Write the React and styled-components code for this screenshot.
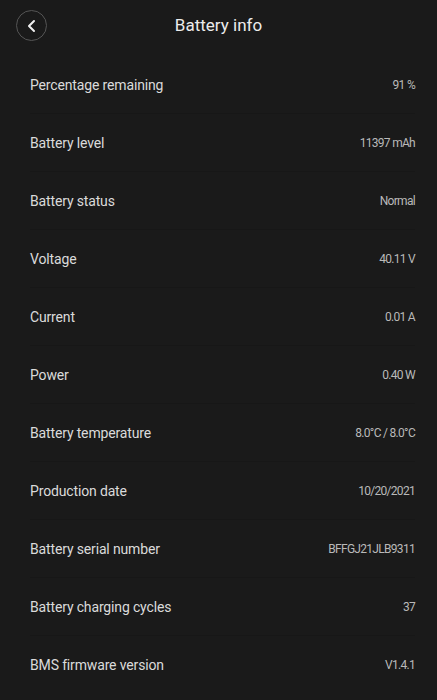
import React from "react";
import styled, { createGlobalStyle } from "styled-components";

const Global = createGlobalStyle`
  html, body { margin: 0; padding: 0; background: #1a1a1a; }
  body { font-family: Roboto, "Noto Sans", sans-serif; -webkit-font-smoothing: antialiased; }
`;

const Page = styled.div`
  width: 437px;
  min-height: 700px;
  background: #1a1a1a;
  color: #dcdcdc;
`;

const Header = styled.header`
  position: relative;
  height: 50px;
  display: flex;
  align-items: center;
  justify-content: center;
`;

const BackButton = styled.button`
  position: absolute;
  left: 16px;
  top: 10px;
  width: 31px;
  height: 31px;
  border-radius: 50%;
  border: 1px solid #555555;
  background: transparent;
  padding: 0;
  display: flex;
  align-items: center;
  justify-content: center;
  color: #f0f0f0;
`;

const Title = styled.h1`
  margin: 0;
  font-size: 17px;
  font-weight: 400;
  color: #ececec;
`;

const List = styled.div`
  padding: 6px 22px 0 30px;
`;

const Row = styled.div`
  height: 57px;
  display: flex;
  align-items: center;
  justify-content: space-between;
  border-bottom: 1px solid ${(p) => (p.$last ? "transparent" : "#171717")};
`;

const Label = styled.span`
  font-size: 14px;
  color: #dadada;
  letter-spacing: -0.15px;
`;

const Value = styled.span`
  font-size: 12px;
  color: #b9b9b9;
  letter-spacing: -0.7px;
`;

const rows = [
  ["Percentage remaining", "91 %"],
  ["Battery level", "11397 mAh"],
  ["Battery status", "Normal"],
  ["Voltage", "40.11 V"],
  ["Current", "0.01 A"],
  ["Power", "0.40 W"],
  ["Battery temperature", "8.0°C / 8.0°C"],
  ["Production date", "10/20/2021"],
  ["Battery serial number", "BFFGJ21JLB9311"],
  ["Battery charging cycles", "37"],
  ["BMS firmware version", "V1.4.1"],
];

export default function App() {
  return (
    <Page>
      <Global />
      <Header>
        <BackButton aria-label="Back">
          <svg width="14" height="14" viewBox="0 0 14 14" fill="none">
            <path d="M9 2 L4 7 L9 12" stroke="currentColor" strokeWidth="2" strokeLinecap="round" strokeLinejoin="round" />
          </svg>
        </BackButton>
        <Title>Battery info</Title>
      </Header>
      <List>
        {rows.map(([l, v], i) => (
          <Row key={l} $last={i === rows.length - 1}>
            <Label>{l}</Label>
            <Value>{v}</Value>
          </Row>
        ))}
      </List>
    </Page>
  );
}
